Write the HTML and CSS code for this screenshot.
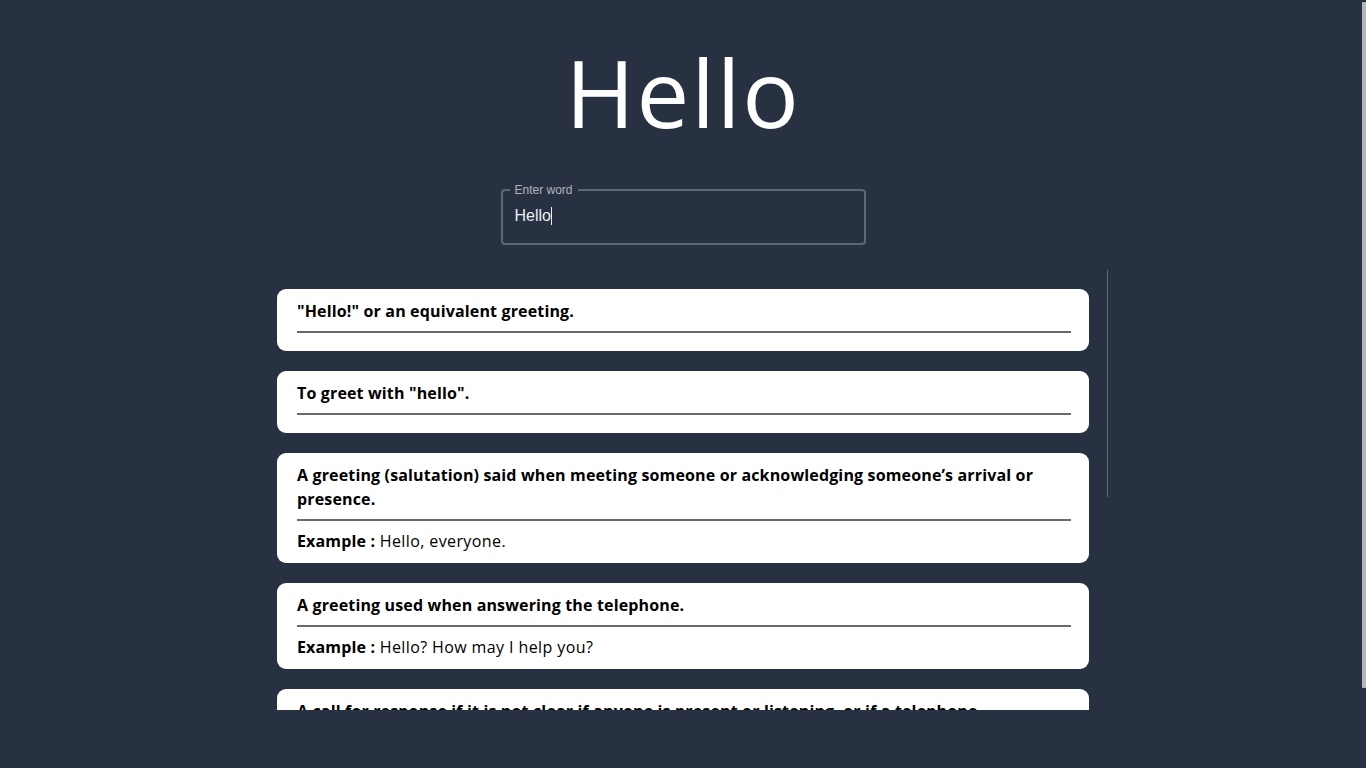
FILE: index.html
```html
<!DOCTYPE html>
<html lang="en">
<head>
<meta charset="utf-8">
<title>Dictionary</title>
<link rel="stylesheet" href="styles.css">
</head>
<body>
<main class="app">
  <h1 class="title">Hello</h1>
  <div class="field">
    <fieldset class="outline"><legend>Enter word</legend></fieldset>
    <div class="field-input">Hello<span class="caret"></span></div>
  </div>
  <div class="results">
    <div class="results-scroll">
      <article class="card">
        <h2 class="def">"Hello!" or an equivalent greeting.</h2>
        <hr class="rule">
        <div class="example"></div>
      </article>
      <article class="card">
        <h2 class="def">To greet with "hello".</h2>
        <hr class="rule">
        <div class="example"></div>
      </article>
      <article class="card">
        <h2 class="def">A greeting (salutation) said when meeting someone or acknowledging someone’s arrival or presence.</h2>
        <hr class="rule">
        <div class="example"><b>Example :</b> Hello, everyone.</div>
      </article>
      <article class="card">
        <h2 class="def">A greeting used when answering the telephone.</h2>
        <hr class="rule">
        <div class="example"><b>Example :</b> Hello? How may I help you?</div>
      </article>
      <article class="card">
        <h2 class="def">A call for response if it is not clear if anyone is present or listening, or if a telephone conversation may have been disconnected.</h2>
        <hr class="rule">
        <div class="example"><b>Example :</b> Hello? Is anyone there?</div>
      </article>
    </div>
    <div class="scroll-thumb"></div>
  </div>
</main>
<div class="page-scrollbar"></div>
</body>
</html>
```
FILE: styles.css
```css
html {
  background: #283141;
}
body {
  margin: 0;
  background: #283141;
  font-family: "Open Sans", "Liberation Sans", sans-serif;
  color: #000;
}
.app {
  display: flex;
  flex-direction: column;
  align-items: center;
}
.page-scrollbar {
  position: fixed;
  top: 2px;
  right: 0;
  width: 4px;
  height: 686px;
  background: #b4b6ba;
  border-radius: 1px;
}
.title {
  margin: 27px 0 0;
  font-weight: 400;
  font-size: 94px;
  line-height: 130px;
  color: #fff;
  letter-spacing: 1.8px;
}
.field {
  position: relative;
  margin-top: 32px;
  width: 365px;
  height: 56px;
}
.outline {
  position: absolute;
  inset: -5px 0 0 0;
  margin: 0;
  padding: 0 7px;
  border: 2px solid #5f6774;
  border-radius: 4px;
  pointer-events: none;
}
.outline legend {
  padding: 0 5px;
  font-family: "Liberation Sans", Arial, sans-serif;
  font-size: 12px;
  line-height: 12px;
  color: #b0b4bb;
}
.field-input {
  position: relative;
  padding: 14.5px 14px;
  font-family: "Liberation Sans", Arial, sans-serif;
  font-size: 16px;
  line-height: 23px;
  color: #eceef1;
}
.caret {
  display: inline-block;
  width: 1px;
  height: 18px;
  background: #eceef1;
  vertical-align: -4px;
}
.results {
  position: relative;
  margin-top: 25px;
  width: 812px;
  height: 440px;
}
.results-scroll {
  height: 440px;
  overflow: hidden;
  box-sizing: border-box;
  padding-top: 19px;
  display: flex;
  flex-direction: column;
  gap: 20px;
}
.scroll-thumb {
  position: absolute;
  top: 0;
  left: 830px;
  width: 1px;
  height: 227px;
  background: #5f6774;
}
.card {
  background: #fff;
  border-radius: 9px;
  padding: 10px 20px;
}
.def {
  margin: 0;
  font-size: 16px;
  line-height: 24px;
  font-weight: 700;
  letter-spacing: 0.15px;
}
.rule {
  margin: 8px -2px 0 0;
  border: 0;
  height: 2px;
  background: #6b6b6b;
}
.example {
  padding-top: 8px;
  font-size: 16px;
  line-height: 24px;
  letter-spacing: 0.4px;
}
.example b {
  font-weight: 700;
  letter-spacing: 0.15px;
}
```
